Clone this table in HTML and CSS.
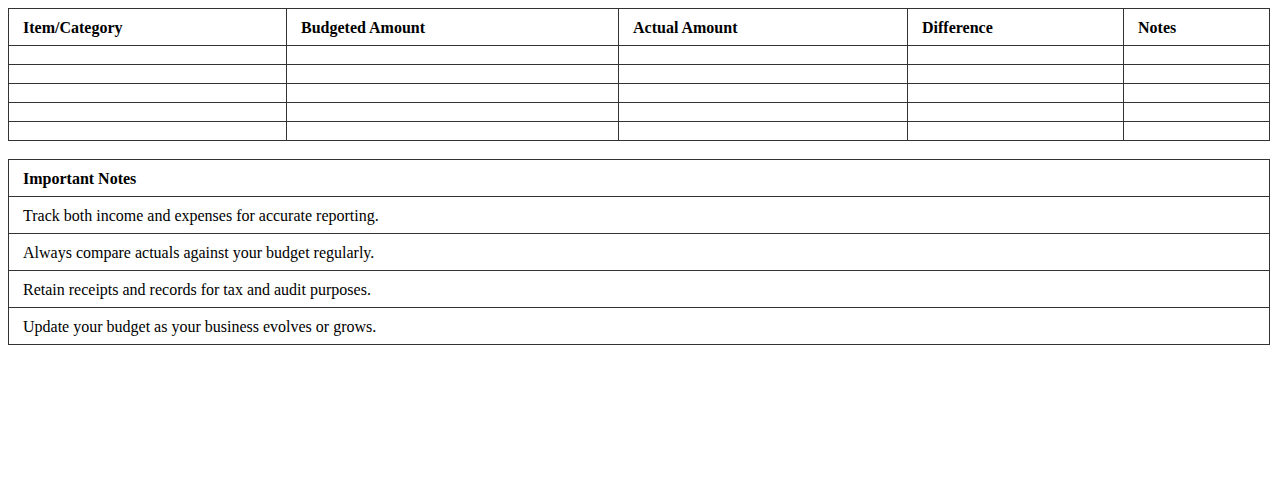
FILE: index.html
```html
<!DOCTYPE html>
<html>
<head>
<meta charset="utf-8">
<link rel="stylesheet" href="styles.css">
</head>
<body>
<table class="budget">
  <colgroup>
    <col class="c1"><col class="c2"><col class="c3"><col class="c4"><col class="c5">
  </colgroup>
  <thead>
    <tr><th>Item/Category</th><th>Budgeted Amount</th><th>Actual Amount</th><th>Difference</th><th>Notes</th></tr>
  </thead>
  <tbody>
    <tr><td></td><td></td><td></td><td></td><td></td></tr>
    <tr><td></td><td></td><td></td><td></td><td></td></tr>
    <tr><td></td><td></td><td></td><td></td><td></td></tr>
    <tr><td></td><td></td><td></td><td></td><td></td></tr>
    <tr><td></td><td></td><td></td><td></td><td></td></tr>
  </tbody>
</table>
<table class="notes">
  <thead><tr><th>Important Notes</th></tr></thead>
  <tbody>
    <tr><td>Track both income and expenses for accurate reporting.</td></tr>
    <tr><td>Always compare actuals against your budget regularly.</td></tr>
    <tr><td>Retain receipts and records for tax and audit purposes.</td></tr>
    <tr><td>Update your budget as your business evolves or grows.</td></tr>
  </tbody>
</table>
</body>
</html>
```
FILE: styles.css
```css
body {
  margin: 8px;
  font-family: "Liberation Serif", "Times New Roman", serif;
  font-size: 16px;
  color: #000;
  background: #fff;
}
table {
  width: 100%;
  border-collapse: collapse;
  table-layout: fixed;
}
th, td {
  border: 1px solid #333;
  padding: 10px 14px 8px;
  text-align: left;
  line-height: 18px;
}
th { font-weight: bold; }
.c1 { width: 278px; }
.c2 { width: 332px; }
.c3 { width: 289px; }
.c4 { width: 216px; }
.notes { margin-top: 18px; }
```
